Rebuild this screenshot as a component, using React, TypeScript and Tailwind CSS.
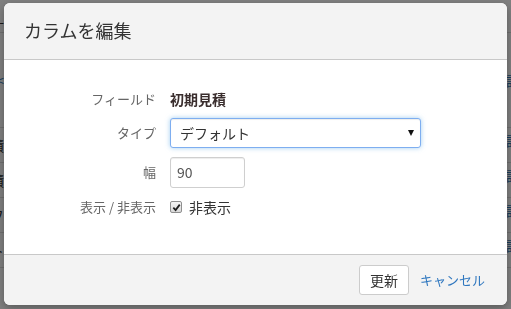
const rows = ["積", "積", "フ", "ト"];

function Background() {
  return (
    <div className="w-full h-screen bg-white text-[#333] text-[14px]">
      <div className="h-[33px] border-b border-[#dedede] flex items-end">
        <div className="w-[4px] overflow-hidden flex justify-end">
          <span className="shrink-0">-</span>
        </div>
      </div>
      <div className="h-[95px] border-b border-[#dedede] flex items-center justify-between">
        <div className="w-[4px] overflow-hidden flex justify-end">
          <span className="shrink-0 text-[#337ab7]">&lt;</span>
        </div>
        <div className="w-[5px] overflow-hidden">
          <span className="text-[#337ab7] block w-[20px]">設</span>
        </div>
      </div>
      {rows.map((r, i) => (
        <div
          key={i}
          className="h-[35px] border-b border-[#dedede] flex items-center justify-between"
        >
          <div className="w-[4px] overflow-hidden flex justify-end">
            <span className="shrink-0">{r}</span>
          </div>
          <div className="w-[5px] overflow-hidden self-start pt-[2px]">
            <span className="text-[#337ab7] block w-[20px]">設</span>
          </div>
        </div>
      ))}
    </div>
  );
}

function Label({ children }: { children: React.ReactNode }) {
  return <div className="w-[152px] text-right text-[13px] text-[#666]">{children}</div>;
}

function Modal() {
  return (
    <div className="w-[503px] h-[302px] bg-white rounded-[6px] flex flex-col overflow-hidden shadow-[0_3px_9px_rgba(0,0,0,0.3)]">
      <div className="h-[57px] shrink-0 bg-[#f3f3f3] border-b border-[#c8c8c8] flex items-center pl-[20px]">
        <h2 className="text-[18px] text-[#333] font-normal pb-[2px]">カラムを編集</h2>
      </div>

      <div className="flex-1 flex flex-col pt-[29px]">
        <div className="h-[20px] flex items-center">
          <Label>フィールド</Label>
          <div className="ml-[14px] text-[14px] font-bold text-[#3a2e2e]">初期見積</div>
        </div>

        <div className="h-[30px] mt-[9px] flex items-center">
          <Label>タイプ</Label>
          <div className="ml-[14px] relative w-[251px] h-[30px]">
            <select
              defaultValue="default"
              className="appearance-none w-full h-full bg-white border border-[#7eaef0] rounded-[3px] pl-[9px] text-[14px] text-[#333] outline-none shadow-[inset_0_1px_1px_rgba(0,0,0,0.075),0_0_5px_rgba(102,175,233,0.6)]"
            >
              <option value="default">デフォルト</option>
            </select>
            <span className="absolute right-[7px] top-[12px] w-0 h-0 border-l-[3px] border-r-[3px] border-t-[6px] border-l-transparent border-r-transparent border-t-[#111] pointer-events-none" />
          </div>
        </div>

        <div className="h-[30px] mt-[9px] flex items-center">
          <Label>幅</Label>
          <input
            defaultValue="90"
            className="ml-[14px] w-[75px] h-[31px] border border-[#cfcfcf] rounded-[3px] pl-[6px] text-[14px] text-[#555] outline-none shadow-[inset_0_1px_1px_rgba(0,0,0,0.075)]"
          />
        </div>

        <div className="h-[20px] mt-[10px] flex items-center">
          <Label>表示 / 非表示</Label>
          <label className="ml-[14px] flex items-center gap-[7px] text-[14px] text-[#333]">
            <span className="w-[12px] h-[12px] border border-[#8f8f8f] rounded-[2px] bg-gradient-to-b from-[#f4f4f4] to-[#d9d9d9] flex items-center justify-center">
              <svg width="9" height="9" viewBox="0 0 10 10">
                <path d="M1.5 5.2 L4 7.8 L8.6 1.8" fill="none" stroke="#1e1e1e" strokeWidth="2" />
              </svg>
            </span>
            非表示
          </label>
        </div>
      </div>

      <div className="h-[51px] shrink-0 bg-[#f3f3f3] border-t border-[#c8c8c8] flex items-center justify-end pr-[22px] gap-[11px]">
        <button className="w-[50px] h-[30px] bg-white border border-[#cccccc] rounded-[3px] text-[14px] text-[#333]">
          更新
        </button>
        <a className="text-[13px] text-[#2f77bf] cursor-pointer">キャンセル</a>
      </div>
    </div>
  );
}

export default function App() {
  return (
    <div
      className="relative w-full h-screen overflow-hidden"
      style={{ fontFamily: '"Noto Sans CJK JP", "Liberation Sans", sans-serif' }}
    >
      <Background />
      <div className="fixed inset-0 bg-black/50 pt-[3px] pl-[4px]">
        <Modal />
      </div>
    </div>
  );
}
